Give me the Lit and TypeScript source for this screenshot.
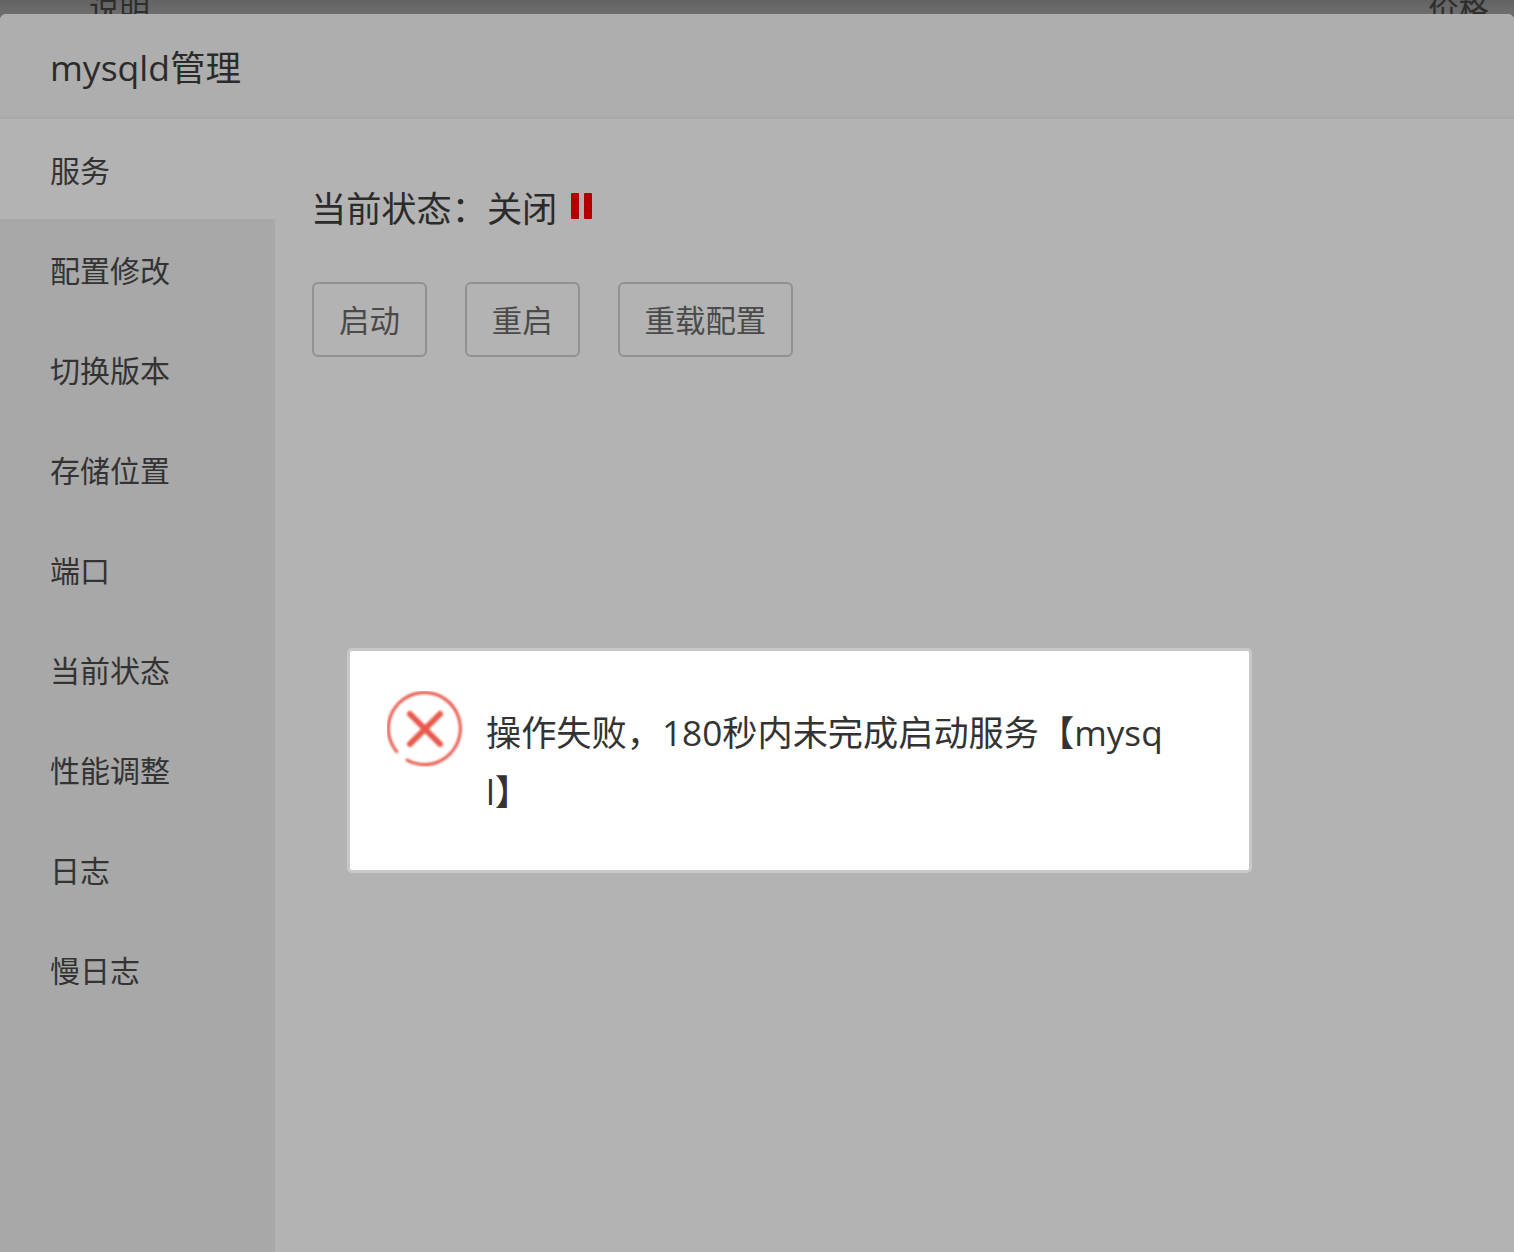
import { LitElement, html, css } from "lit";
import { customElement } from "lit/decorators.js";

const MENU = ["服务", "配置修改", "切换版本", "存储位置", "端口", "当前状态", "性能调整", "日志", "慢日志"];

@customElement("app-root")
export class AppRoot extends LitElement {
  static styles = css`
    :host {
      display: block;
      position: relative;
      width: 1514px;
      height: 1252px;
      overflow: hidden;
      background: #696969;
      font-family: "Open Sans", "Noto Sans CJK SC", sans-serif;
      color: #2b2b2b;
    }
    .strip {
      height: 14px;
      overflow: hidden;
      display: flex;
      justify-content: space-between;
      align-items: flex-end;
      padding: 0 25px 0 89px;
      background: linear-gradient(#626262, #6e6e6e);
      font-size: 30.4px;
      line-height: 40px;
      color: #2e2e2e;
    }
    .strip span { display: block; height: 40px; margin-bottom: -15px; flex: none; }
    .window {
      height: 1238px;
      display: flex;
      flex-direction: column;
      border-radius: 6px 6px 0 0;
      overflow: hidden;
      background: #b3b3b3;
    }
    header {
      height: 102px;
      flex: none;
      box-sizing: content-box;
      display: flex;
      align-items: center;
      padding: 0 0 1px 50px;
      font-size: 35.5px;
      background: #aeaeae;
      border-bottom: 2px solid #a9a9a9;
    }
    .body { flex: 1; display: flex; min-height: 0; }
    nav { width: 275px; flex: none; background: #a8a8a8; }
    .item {
      height: 100px;
      box-sizing: border-box;
      display: flex;
      align-items: center;
      padding: 0 0 1px 50px;
      font-size: 30px;
      color: #333;
    }
    .item.active { background: #b3b3b3; }
    main { flex: 1; padding: 43px 0 0 37px; }
    .status {
      display: flex;
      align-items: center;
      height: 90px;
      box-sizing: border-box;
      padding-bottom: 2px;
      font-size: 35.2px;
      color: #2b2b2b;
    }
    .status-text { margin-left: -1px; }
    .pause { width: 22px; height: 26px; margin: 0 0 0 14px; flex: none; display: block; }
    .buttons { display: flex; gap: 38px; margin-top: 30px; }
    .btn {
      height: 75px;
      box-sizing: border-box;
      padding: 0 25px 2px;
      display: flex;
      align-items: center;
      border: 2px solid #919191;
      border-radius: 6px;
      font-size: 30.4px;
      color: #4a4a4a;
    }
    .dialog {
      position: absolute;
      left: 347px;
      top: 648px;
      width: 905px;
      height: 225px;
      box-sizing: border-box;
      border: 3px solid #c9c9c9;
      border-radius: 5px;
      background: #fff;
      display: flex;
      align-items: flex-start;
      padding: 40px 0 0 37px;
      color: #333;
    }
    .icon { width: 76px; height: 76px; flex: none; display: block; }
    .msg {
      width: 680px;
      margin: 12px 0 0 23px;
      font-size: 35.2px;
      line-height: 59px;
      word-break: break-all;
    }
  `;

  render() {
    return html`
      <div class="strip"><span>说明</span><span>价格</span></div>
      <div class="window">
        <header>mysqld管理</header>
        <div class="body">
          <nav>
            ${MENU.map((m, i) => html`<div class="item ${i === 0 ? "active" : ""}">${m}</div>`)}
          </nav>
          <main>
            <div class="status">
              <span class="status-text">当前状态：关闭</span>
              <svg class="pause" viewBox="0 0 22 26">
                <rect x="0" y="0" width="8" height="26" rx="1" fill="#b30000"></rect>
                <rect x="13" y="0" width="8" height="26" rx="1" fill="#b30000"></rect>
              </svg>
            </div>
            <div class="buttons">
              <div class="btn">启动</div>
              <div class="btn">重启</div>
              <div class="btn">重载配置</div>
            </div>
          </main>
        </div>
      </div>
      <div class="dialog">
        <svg class="icon" viewBox="0 0 76 76">
          <g fill="none" stroke="#e8594c" style="filter:blur(0.8px)">
            <path d="M19 68.5 A 36 36 0 1 0 10.5 61.5" stroke-width="3"></path>
            <path d="M23 23 L53 53 M53 23 L23 53" stroke-width="6" stroke-linecap="round"></path>
          </g>
        </svg>
        <div class="msg">操作失败，180秒内未完成启动服务【mysql】</div>
      </div>
    `;
  }
}
